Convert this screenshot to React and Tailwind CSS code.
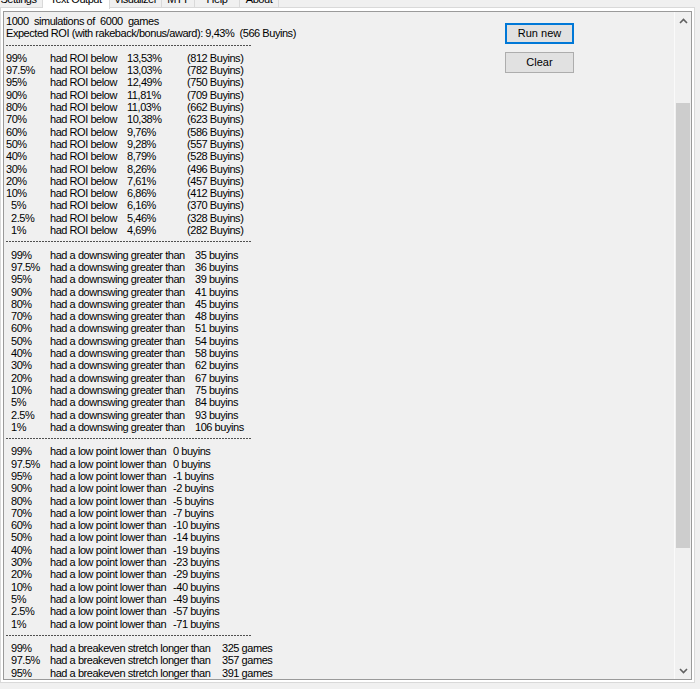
import React from 'react';

const roiRows = [
  ['99%', '13,53%', '(812 Buyins)'],
  ['97.5%', '13,03%', '(782 Buyins)'],
  ['95%', '12,49%', '(750 Buyins)'],
  ['90%', '11,81%', '(709 Buyins)'],
  ['80%', '11,03%', '(662 Buyins)'],
  ['70%', '10,38%', '(623 Buyins)'],
  ['60%', '9,76%', '(586 Buyins)'],
  ['50%', '9,28%', '(557 Buyins)'],
  ['40%', '8,79%', '(528 Buyins)'],
  ['30%', '8,26%', '(496 Buyins)'],
  ['20%', '7,61%', '(457 Buyins)'],
  ['10%', '6,86%', '(412 Buyins)'],
  ['5%', '6,16%', '(370 Buyins)', true],
  ['2.5%', '5,46%', '(328 Buyins)', true],
  ['1%', '4,69%', '(282 Buyins)', true],
];

const pcts = ['99%', '97.5%', '95%', '90%', '80%', '70%', '60%', '50%', '40%', '30%', '20%', '10%', '5%', '2.5%', '1%'];
const downswing = [35, 36, 39, 41, 45, 48, 51, 54, 58, 62, 67, 75, 84, 93, 106];
const lowPoint = [0, 0, -1, -2, -5, -7, -10, -14, -19, -23, -29, -40, -49, -57, -71];
const breakeven = [325, 357, 391];

const tabs = [
  { label: 'Settings', w: 'w-[48px] -ml-[5px]' },
  { label: 'Text Output', w: 'w-[67px]', active: true },
  { label: 'Visualizer', w: 'w-[52px]' },
  { label: 'MTT', w: 'w-[33px]' },
  { label: 'Help', w: 'w-[45px]' },
  { label: 'About', w: 'w-[39px]' },
];

const Dashes = () => (
  <div className="h-[12.3px] pt-[5px]">
    <div className="h-px w-[246px] bg-[repeating-linear-gradient(90deg,#505050_0px,#505050_2px,transparent_2px,transparent_3px)]" />
  </div>
);

const Row = ({ pct, indent, text, textW, value, valueW, extra }) => (
  <div className="flex h-[12.3px] whitespace-nowrap">
    <span className={`w-[44px] shrink-0 ${indent ? 'pl-[5px]' : ''}`}>{pct}</span>
    <span className={`${textW} shrink-0`}>{text}</span>
    <span className={`${valueW || ''} shrink-0`}>{value}</span>
    {extra && <span>{extra}</span>}
  </div>
);

const Chevron = ({ down }) => (
  <svg width="9" height="6" viewBox="0 0 9 6">
    <polyline
      points={down ? '1,1 4.5,4.5 8,1' : '1,5 4.5,1.5 8,5'}
      fill="none"
      stroke="#606060"
      strokeWidth="1.6"
    />
  </svg>
);

export default function App() {
  return (
    <div className="w-[700px] h-[689px] overflow-hidden bg-[#f0f0f0] text-black text-[11px] leading-[12.3px] tracking-[-0.45px] font-['Liberation_Sans',Arial,sans-serif]">
      {/* tab strip, cut off at the top */}
      <div className="flex items-start h-[7px]">
        {tabs.map((t) => (
          <div
            key={t.label}
            className={`${t.w} shrink-0 overflow-hidden border-r border-[#d9d9d9] text-center ${
              t.active ? 'relative z-10 h-[9px] bg-white' : 'h-[7px] bg-[#f0f0f0]'
            }`}
          >
            <div className="-mt-[7px] leading-[12px] whitespace-nowrap">{t.label}</div>
          </div>
        ))}
      </div>

      {/* tab page */}
      <div className="w-[695px] h-[676px] border border-[#d9d9d9] bg-white px-[2px] pt-[3px] pb-[2px]">
        {/* read-only text box */}
        <div className="flex h-[669px] border border-[#9a9a9a] bg-[#f0f0f0] overflow-hidden">
          <div className="flex flex-1 pl-[2px] pt-[3px] overflow-hidden">
            <div className="w-[499px] shrink-0">
              <div className="whitespace-pre h-[12.3px]">1000  simulations of  6000  games</div>
              <div className="whitespace-pre h-[12.3px]">Expected ROI (with rakeback/bonus/award): 9,43%  (566 Buyins)</div>
              <Dashes />
              {roiRows.map(([pct, value, extra, indent]) => (
                <Row
                  key={'roi' + pct}
                  pct={pct}
                  indent={indent}
                  text="had ROI below"
                  textW="w-[77px]"
                  value={value}
                  valueW="w-[60px]"
                  extra={extra}
                />
              ))}
              <Dashes />
              {pcts.map((pct, i) => (
                <Row
                  key={'ds' + pct}
                  pct={pct}
                  indent
                  text="had a downswing greater than"
                  textW="w-[145px]"
                  value={`${downswing[i]} buyins`}
                />
              ))}
              <Dashes />
              {pcts.map((pct, i) => (
                <Row
                  key={'lp' + pct}
                  pct={pct}
                  indent
                  text="had a low point lower than"
                  textW="w-[123px]"
                  value={`${lowPoint[i]} buyins`}
                />
              ))}
              <Dashes />
              {breakeven.map((v, i) => (
                <Row
                  key={'be' + i}
                  pct={pcts[i]}
                  indent
                  text="had a breakeven stretch longer than"
                  textW="w-[172px]"
                  value={`${v} games`}
                />
              ))}
            </div>

            <div className="flex flex-col gap-[8px] mt-[8px] w-[69px] shrink-0 tracking-normal">
              <button className="h-[21px] bg-[#e1e1e1] border border-[#0078d7] shadow-[inset_0_0_0_1px_#0078d7] text-[11px] leading-none">
                Run new
              </button>
              <button className="h-[21px] bg-[#e1e1e1] border border-[#adadad] text-[11px] leading-none">
                Clear
              </button>
            </div>
          </div>

          {/* vertical scrollbar */}
          <div className="w-[17px] shrink-0 flex flex-col bg-[#f0f0f0] border-l border-[#fafafa]">
            <div className="h-[17px] flex items-center justify-center">
              <Chevron />
            </div>
            <div className="h-[74px]" />
            <div className="h-[445px] mx-px bg-[#cdcdcd]" />
            <div className="flex-1" />
            <div className="h-[17px] flex items-center justify-center">
              <Chevron down />
            </div>
          </div>
        </div>
      </div>
    </div>
  );
}
